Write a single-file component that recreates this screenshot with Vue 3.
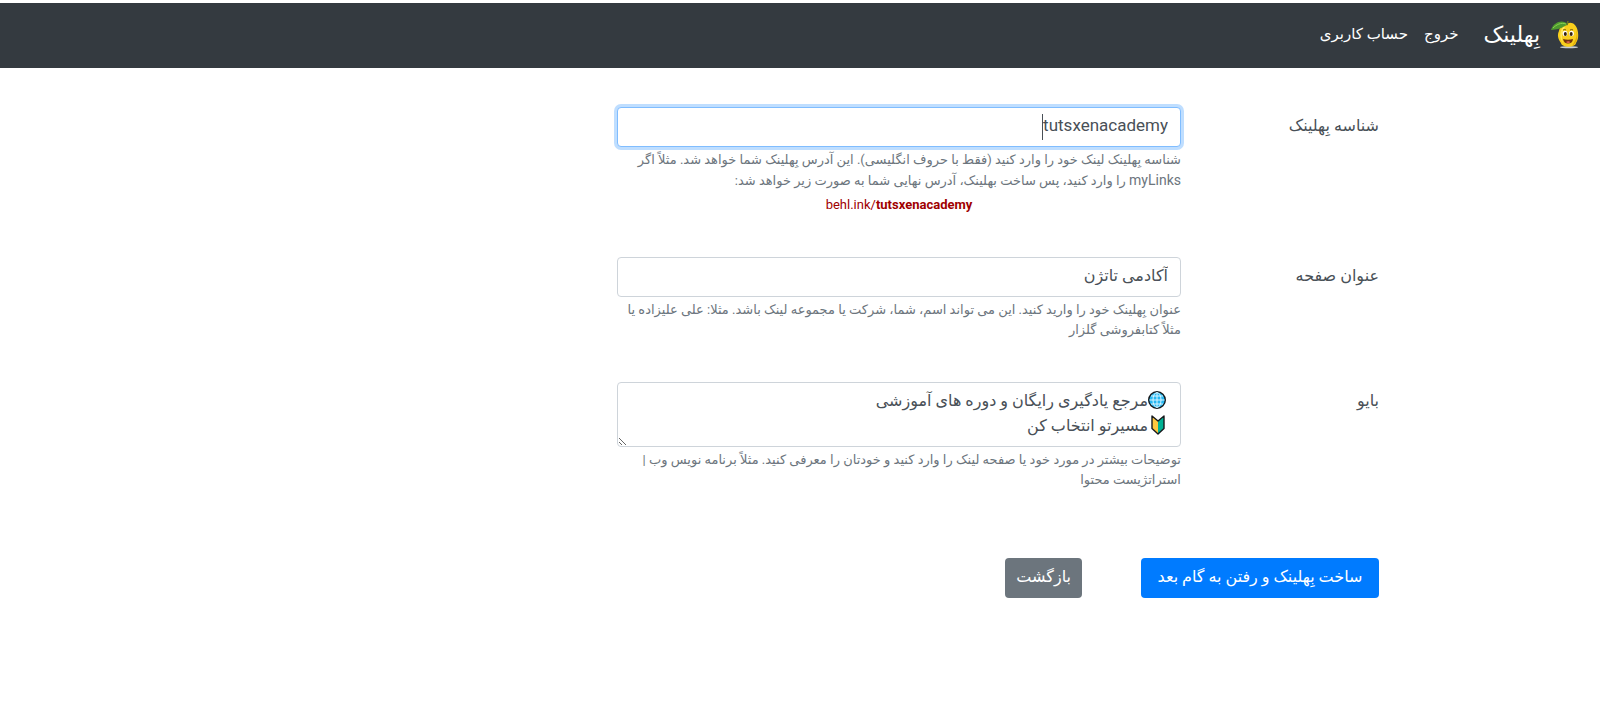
<script setup>
import { ref, onMounted } from 'vue'

const slug = ref('tutsxenacademy')
const title = ref('آکادمی تاتژن')
const bio = ref('🌐مرجع یادگیری رایگان و دوره های آموزشی\n🔰مسیرتو انتخاب کن')
const slugInput = ref(null)

onMounted(() => slugInput.value.focus())
</script>

<template>
  <div class="page" dir="rtl" lang="fa">
    <nav class="navbar">
      <a class="brand" href="#">
        <svg class="logo" viewBox="0 0 28 28" aria-hidden="true">
          <ellipse cx="18" cy="26.200" rx="9" ry="1.100" fill="#c9cdd1" />
          <path d="M16 3C20 0 25 3 26.500 9C28 15 27 19 25 22C24 27 11 27 10 22C7 18 6 14 8 10C9 5 12 3 16 3Z" fill="#f9cf1c" />
          <path d="M12 6C8 11 9 18 12 22C10 16 11 11 14 6Z" fill="#ffe95b" />
          <path d="M25 9C27 15 24 20 21 25C26 23 28 14 25 9Z" fill="#e3ac0b" />
          <path d="M17 4C13 -2 3 0 0 9C6 8 9 8 12 6C14 5 15 4 17 4Z" fill="#4f9a2f" />
          <path d="M15 3C10 1 5 4 2 7" fill="none" stroke="#8bd052" />
          <path d="M16 4L17 0" stroke="#6b7a20" stroke-width="1.500" />
          <ellipse cx="14" cy="12.500" rx="2.400" ry="2.800" fill="#fff" />
          <ellipse cx="20.500" cy="12.500" rx="2.400" ry="2.800" fill="#fff" />
          <ellipse cx="14.300" cy="13" rx="1.500" ry="1.900" fill="#38240e" />
          <ellipse cx="20.200" cy="13" rx="1.500" ry="1.900" fill="#38240e" />
          <path d="M12 9Q14 8 15 9M19 9Q21 8 22 9" fill="none" stroke="#7a5a10" />
          <path d="M12 18Q17 19.500 22 18Q21.500 22.500 17 22.500Q13 22.500 12 18Z" fill="#73330d" />
          <path d="M15 21Q17 19.500 19.500 21Q17 23 15 21Z" fill="#ec6b52" />
        </svg>
        <span>بِهلینک</span>
      </a>
      <a class="nav-link" href="#">خروج</a>
      <a class="nav-link" href="#">حساب کاربری</a>
    </nav>

    <form class="form" @submit.prevent>
      <div class="row">
        <label class="label" for="slug">شناسه بِهلینک</label>
        <div class="field">
          <div class="control-wrap">
            <input id="slug" ref="slugInput" v-model="slug" class="control latin active" type="text" />
            <span class="caret-line" aria-hidden="true"><span class="ghost">{{ slug }}</span><span class="caret"></span></span>
          </div>
          <small class="help">شناسه بِهلینک لینک خود را وارد کنید (فقط با حروف انگلیسی). این آدرس بِهلینک شما خواهد شد. مثلاً اگر <span class="latin-text">myLinks</span> را وارد کنید، پس ساخت بهلینک، آدرس نهایی شما به صورت زیر خواهد شد:</small>
          <div class="url" dir="ltr">behl.ink/<b>{{ slug }}</b></div>
        </div>
      </div>

      <div class="row">
        <label class="label" for="title">عنوان صفحه</label>
        <div class="field">
          <input id="title" v-model="title" class="control" type="text" />
          <small class="help">عنوان بِهلینک خود را وارید کنید. این می تواند اسم، شما، شرکت یا مجموعه لینک باشد. مثلا: علی علیزاده یا مثلاً کتابفروشی گلزار</small>
        </div>
      </div>

      <div class="row">
        <label class="label" for="bio">بایو</label>
        <div class="field">
          <div class="control-wrap">
            <textarea id="bio" v-model="bio" class="control" rows="2"></textarea>
            <span class="emoji-column" aria-hidden="true">
              <svg class="emoji" viewBox="0 0 20 25">
                <rect width="20" height="25" fill="#fff" />
                <circle cx="9" cy="12" r="8.300" fill="#26b8f2" stroke="#16191c" stroke-width="1.400" />
                <path d="M9 4.500V19.500M1.500 12H16.500M3 8H15M3 16H15" fill="none" stroke="#d8f4ff" />
                <ellipse cx="9" cy="12" rx="4" ry="7.500" fill="none" stroke="#d8f4ff" />
              </svg>
              <svg class="emoji" viewBox="0 0 20 25">
                <rect width="20" height="25" fill="#fff" />
                <path d="M4 3L10 8V21L4 15.500Z" fill="#ffc83d" />
                <path d="M16 3L10 8V21L16 15.500Z" fill="#00b294" />
                <path d="M4 3L10 8L16 3V15.500L10 21L4 15.500Z" fill="none" stroke="#16191c" stroke-width="1.400" stroke-linejoin="round" />
              </svg>
            </span>
          </div>
          <small class="help">توضیحات بیشتر در مورد خود یا صفحه لینک را وارد کنید و خودتان را معرفی کنید. مثلاً برنامه نویس وب | استراتژیست محتوا</small>
        </div>
      </div>

      <div class="actions">
        <button class="btn primary" type="submit">ساخت بِهلینک و رفتن به گام بعد</button>
        <button class="btn secondary" type="button">بازگشت</button>
      </div>
    </form>
  </div>
</template>

<style>
body {
  background: #fff;
}
</style>

<style scoped>
* {
  box-sizing: border-box;
}

.page {
  padding-top: 3px;
  font-family: Roboto, 'DejaVu Sans', sans-serif;
  font-size: 16px;
  line-height: 25px;
  color: #495057;
}

.navbar {
  display: flex;
  align-items: center;
  height: 65px;
  padding: 0 21px 2px;
  background: #343a40;
}

.brand,
.nav-link {
  color: #fff;
  text-decoration: none;
}

.brand {
  display: flex;
  align-items: center;
  gap: 11px;
  margin-left: 17px;
  font-size: 22px;
}

.logo {
  width: 28px;
  height: 28px;
}

.nav-link {
  padding: 8px;
  font-size: 15px;
}

.form {
  max-width: 1188px;
  margin: 0 auto;
  padding-top: 39px;
}

.row {
  display: grid;
  grid-template-columns: 2fr 6fr 4fr;
  margin-bottom: 42px;
}

.label {
  padding: 6px 15px;
}

.field {
  padding: 0 15px;
}

.control-wrap {
  position: relative;
}

.control {
  display: block;
  width: 100%;
  height: 40px;
  margin: 0;
  padding: 4px 12px 8px;
  border: 1px solid #ced4da;
  border-radius: 4px;
  outline: 0;
  background: #fff;
  font: inherit;
  color: #495057;
}

textarea.control {
  height: 65px;
  padding: 5px 12px;
  resize: vertical;
  overflow: hidden;
}

.emoji-column {
  position: absolute;
  top: 6px;
  right: 13px;
  display: flex;
  flex-direction: column;
  pointer-events: none;
}

.emoji {
  width: 20px;
  height: 25px;
}

.control.latin {
  font-size: 17px;
  caret-color: transparent;
}

.active {
  border-color: #80bdff;
  box-shadow: 0 0 0 3px #bfdeff;
}

.caret-line {
  position: absolute;
  top: 7px;
  right: 13px;
  display: flex;
  font-size: 17px;
  pointer-events: none;
}

.ghost {
  visibility: hidden;
}

.caret {
  width: 1px;
  height: 26px;
  background: #495057;
}

.help {
  display: block;
  margin-top: 3px;
  font-size: 13px;
  line-height: 20px;
  color: #6c757d;
}

.latin-text {
  font-size: 14px;
}

.url {
  margin-top: 4px;
  font-size: 13px;
  line-height: 20px;
  text-align: center;
  color: #a00000;
}

.actions {
  display: flex;
  gap: 59px;
  padding: 26px 15px;
}

.btn {
  height: 40px;
  padding: 0 11px 3px;
  border: 0;
  border-radius: 4px;
  font: inherit;
  color: #fff;
}

.primary {
  min-width: 238px;
  background: #007bff;
}

.secondary {
  background: #6c757d;
}
</style>
